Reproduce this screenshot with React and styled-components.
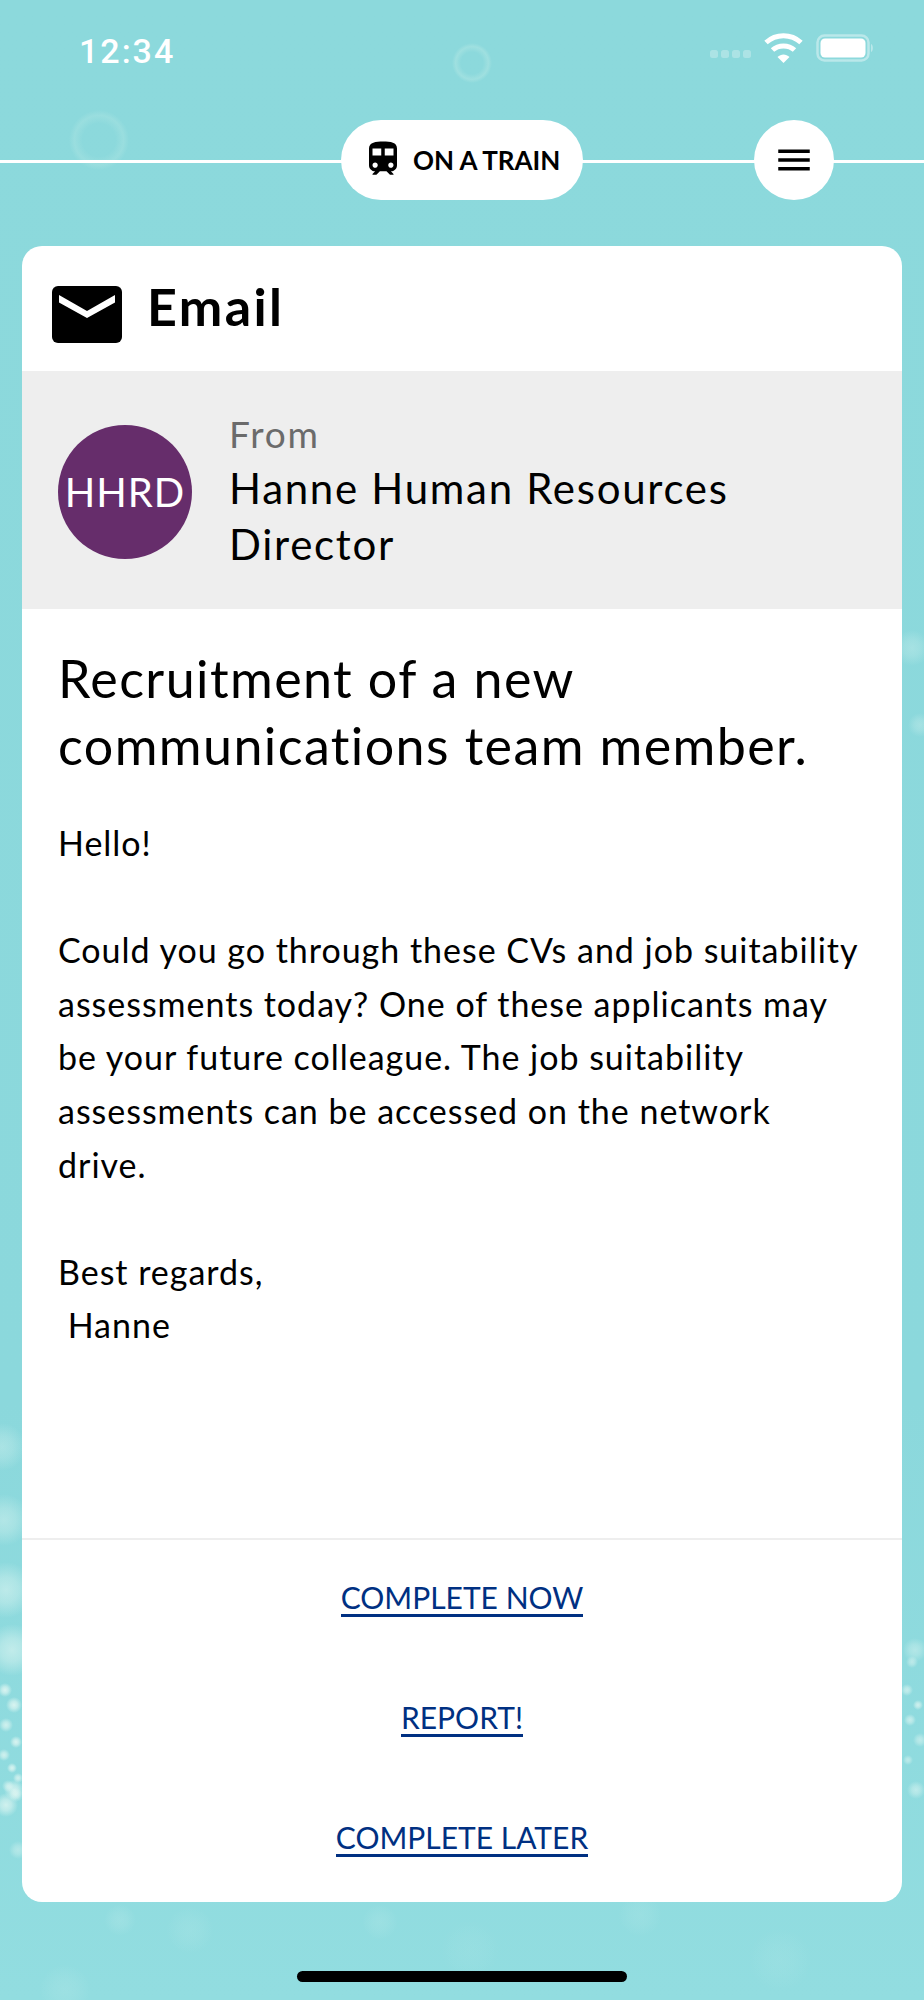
import React from 'react'
import styled, { createGlobalStyle } from 'styled-components'
import { MdTrain, MdMenu } from 'react-icons/md'

const FONT = `Lato, "Noto Sans", sans-serif`

// soft bubbles and the glitter along the bottom of the photo backdrop
const spot = (x, y, r, a) =>
  `radial-gradient(circle ${r}px at ${x}px ${y}px, rgba(235,250,245,${a}) 0%, rgba(235,250,245,${a * 0.7}) 45%, rgba(235,250,245,0) 100%)`
const ring = (x, y, r, a) =>
  `radial-gradient(circle ${r}px at ${x}px ${y}px, rgba(190,235,230,0) 55%, rgba(190,235,230,${a}) 82%, rgba(190,235,230,0) 100%)`

const glitter = [
  [4, 1520, 26, 0.4], [6, 1590, 28, 0.5], [12, 1650, 26, 0.55], [5, 1690, 7, 0.8], [14, 1705, 8, 0.8],
  [6, 1725, 7, 0.7], [16, 1742, 6, 0.8], [4, 1755, 6, 0.7], [12, 1768, 5, 0.8], [18, 1778, 5, 0.7],
  [8, 1786, 6, 0.6], [16, 1795, 7, 0.6], [6, 1805, 12, 0.7], [14, 1790, 10, 0.7], [18, 1850, 9, 0.4],
  [915, 1650, 12, 0.4], [912, 1662, 6, 0.5], [907, 1690, 6, 0.6], [918, 1705, 5, 0.7], [910, 1720, 6, 0.6],
  [920, 1740, 7, 0.5], [908, 1760, 5, 0.5], [916, 1790, 9, 0.5], [912, 648, 18, 0.28], [920, 725, 12, 0.28],
  [120, 1920, 16, 0.14], [190, 1930, 24, 0.1], [380, 1922, 18, 0.12], [640, 1915, 22, 0.1],
  [780, 1960, 32, 0.08], [65, 1990, 26, 0.12], [470, 1950, 30, 0.06],
]

const backdrop = [
  ring(99, 140, 30, 0.28),
  ring(472, 63, 20, 0.38),
  spot(2, 1447, 24, 0.32),
  ...glitter.map(g => spot(...g)),
  'linear-gradient(180deg, #8cd9dc 0%, #8bd8dc 70%, #92dde0 100%)',
].join(', ')

const GlobalStyle = createGlobalStyle`
  body {
    margin: 0;
    font-family: ${FONT};
    font-variant-ligatures: none;
    background: #8bd8dc;
  }
`

const Page = styled.div`
  width: 924px;
  height: 2000px;
  overflow: hidden;
  display: flex;
  flex-direction: column;
  background: ${backdrop};
`

const StatusBar = styled.div`
  height: 120px;
  box-sizing: border-box;
  padding: 32px 50px 0 79px;
  display: flex;
  justify-content: space-between;
  align-items: flex-start;
`

const Clock = styled.div`
  color: #fff;
  font-family: Roboto, sans-serif;
  font-weight: 500;
  font-size: 34px;
  line-height: 38px;
  letter-spacing: 2px;
`

const NavBar = styled.div`
  height: 80px;
  margin-bottom: 46px;
  display: grid;
  grid-template-columns: 1fr auto 1fr;
  justify-items: end;
  background: linear-gradient(#fff, #fff) 0 40px / 100% 3px no-repeat;
`

const ModePill = styled.div`
  grid-column: 2;
  width: 242px;
  height: 80px;
  box-sizing: border-box;
  padding-left: 21px;
  border-radius: 40px;
  background: #fff;
  display: flex;
  align-items: center;
  gap: 9px;
  font-size: 26px;
  font-weight: 700;
  color: #000;
  svg {
    margin-top: -2px;
  }
`

const MenuButton = styled.div`
  grid-column: 3;
  width: 80px;
  height: 80px;
  margin-right: 90px;
  border-radius: 50%;
  background: #fff;
  display: flex;
  align-items: center;
  justify-content: center;
`

const Card = styled.div`
  width: 880px;
  height: 1656px;
  margin: 0 22px;
  border-radius: 20px;
  background: #fff;
  display: flex;
  flex-direction: column;
  overflow: hidden;
`

const CardHeader = styled.div`
  height: 125px;
  flex: none;
  box-sizing: border-box;
  padding: 40px 0 0 30px;
  display: flex;
  align-items: flex-start;
  gap: 27px;
`

const CardTitle = styled.h1`
  margin: -10px 0 0 -2px;
  font-size: 52px;
  line-height: 60px;
  font-weight: 700;
  letter-spacing: 2.4px;
  color: #000;
`

const FromRow = styled.div`
  height: 238px;
  flex: none;
  box-sizing: border-box;
  padding: 4px 0 0 36px;
  background: #eee;
  display: flex;
  align-items: center;
  gap: 37px;
`

const Avatar = styled.div`
  width: 134px;
  height: 134px;
  flex: none;
  border-radius: 50%;
  background: #662d6b;
  color: #fff;
  font-size: 40px;
  letter-spacing: 1px;
  display: flex;
  align-items: center;
  justify-content: center;
`

const FromLabel = styled.div`
  margin-bottom: 4px;
  font-size: 37px;
  line-height: 44px;
  letter-spacing: 1.8px;
  color: #6b6b6b;
`

const FromName = styled.div`
  font-size: 42px;
  line-height: 56px;
  letter-spacing: 1.7px;
  color: #000;
  width: 600px;
`

const Message = styled.div`
  flex: 1;
  padding: 36px 36px 0;
`

const Subject = styled.h2`
  margin: 0 0 37px;
  font-size: 52px;
  line-height: 67px;
  font-weight: 400;
  letter-spacing: 1.4px;
  color: #000;
`

const BodyText = styled.p`
  margin: 0;
  font-size: 34px;
  line-height: 53.6px;
  letter-spacing: 0.98px;
  color: #000;
  white-space: pre-wrap;
`

const Actions = styled.div`
  height: 364px;
  flex: none;
  box-sizing: border-box;
  border-top: 2px solid #eee;
  padding-top: 40px;
  display: flex;
  flex-direction: column;
  align-items: center;
  gap: 83px;
`

const ActionLink = styled.a`
  font-size: 30px;
  line-height: 34px;
  color: #003082;
  border-bottom: 3px solid #003082;
`

const HomeBar = styled.div`
  width: 330px;
  height: 11px;
  margin: 69px auto 0;
  flex: none;
  border-radius: 6px;
  background: #000;
`

const StatusIcons = () => (
  <svg width="164" height="34" viewBox="0 0 164 34">
    <g fill="#fff" opacity="0.28">
      <rect x="0" y="18" width="8" height="8" rx="2.5" />
      <rect x="11" y="18" width="8" height="8" rx="2.5" />
      <rect x="22" y="18" width="8" height="8" rx="2.5" />
      <rect x="33" y="18" width="8" height="8" rx="2.5" />
    </g>
    <g fill="none" stroke="#fff" strokeWidth="5">
      <path d="M56 10.5 C66 1.5 81 1.5 91 10.5" />
      <path d="M62.5 18 C68.5 12.5 78.5 12.5 84.5 18" />
    </g>
    <path d="M67.5 25 C71 21.5 76 21.5 79.5 25 L73.5 31 Z" fill="#fff" />
    <rect x="107.5" y="3.5" width="51" height="25" rx="7" fill="none" stroke="#fff" strokeOpacity="0.4" strokeWidth="2.5" />
    <rect x="110.5" y="6.5" width="45" height="19" rx="4.5" fill="#fff" />
    <path d="M161 12 C163.5 13 163.5 19 161 20 Z" fill="#fff" opacity="0.4" />
  </svg>
)

const MailIcon = () => (
  <svg width="70" height="57" viewBox="0 0 70 57">
    <rect width="70" height="57" rx="6" fill="#000" />
    <path d="M7 9 L35 25 L63 9 L63 16.5 L35 32 L7 16.5 Z" fill="#fff" />
  </svg>
)

const App = () => {
  return (
    <Page>
      <GlobalStyle />
      <StatusBar>
        <Clock>12:34</Clock>
        <StatusIcons />
      </StatusBar>
      <NavBar>
        <ModePill>
          <MdTrain size={42} />
          ON A TRAIN
        </ModePill>
        <MenuButton>
          <MdMenu size={42} />
        </MenuButton>
      </NavBar>
      <Card>
        <CardHeader>
          <MailIcon />
          <CardTitle>Email</CardTitle>
        </CardHeader>
        <FromRow>
          <Avatar>HHRD</Avatar>
          <div>
            <FromLabel>From</FromLabel>
            <FromName>Hanne Human Resources Director</FromName>
          </div>
        </FromRow>
        <Message>
          <Subject>Recruitment of a new communications team member.</Subject>
          <BodyText>
            {'Hello!\n\nCould you go through these CVs and job suitability assessments today? One of these applicants may be your future colleague. The job suitability assessments can be accessed on the network drive.\n\nBest regards,\n Hanne'}
          </BodyText>
        </Message>
        <Actions>
          <ActionLink>COMPLETE NOW</ActionLink>
          <ActionLink>REPORT!</ActionLink>
          <ActionLink>COMPLETE LATER</ActionLink>
        </Actions>
      </Card>
      <HomeBar />
    </Page>
  )
}

export default App
